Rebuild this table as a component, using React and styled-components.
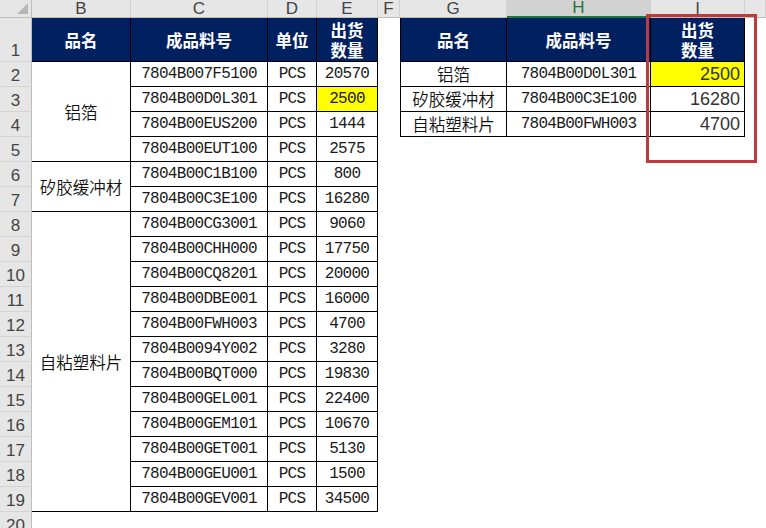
import React from 'react';
import styled, { createGlobalStyle, css } from 'styled-components';

const GlobalStyle = createGlobalStyle`
  html, body {
    margin: 0;
    padding: 0;
    background: #ffffff;
    overflow: hidden;
  }
`;

const COLS = ['B', 'C', 'D', 'E', 'F', 'G', 'H', 'I', ''];

const leftRows = [
    { code: '7804B007F5100', qty: '20570' },
    { code: '7804B00D0L301', qty: '2500', hi: true },
    { code: '7804B00EUS200', qty: '1444' },
    { code: '7804B00EUT100', qty: '2575' },
    { code: '7804B00C1B100', qty: '800' },
    { code: '7804B00C3E100', qty: '16280' },
    { code: '7804B00CG3001', qty: '9060' },
    { code: '7804B00CHH000', qty: '17750' },
    { code: '7804B00CQ8201', qty: '20000' },
    { code: '7804B00DBE001', qty: '16000' },
    { code: '7804B00FWH003', qty: '4700' },
    { code: '7804B0094Y002', qty: '3280' },
    { code: '7804B00BQT000', qty: '19830' },
    { code: '7804B00GEL001', qty: '22400' },
    { code: '7804B00GEM101', qty: '10670' },
    { code: '7804B00GET001', qty: '5130' },
    { code: '7804B00GEU001', qty: '1500' },
    { code: '7804B00GEV001', qty: '34500' },
];

const groups = [
    { name: '铝箔', from: 2, span: 4 },
    { name: '矽胶缓冲材', from: 6, span: 2 },
    { name: '自粘塑料片', from: 8, span: 12 },
];

const rightRows = [
    { name: '铝箔', code: '7804B00D0L301', qty: '2500', hi: true },
    { name: '矽胶缓冲材', code: '7804B00C3E100', qty: '16280' },
    { name: '自粘塑料片', code: '7804B00FWH003', qty: '4700' },
];

const Sheet = styled.div`
  position: relative;
  display: grid;
  grid-template-columns: 32px 99px 137px 49px 61px 22px 107px 144px 94px 1fr;
  grid-template-rows: 18px 44px repeat(19, 25px);
  width: 766px;
  height: 528px;
  overflow: hidden;
  background: #ffffff;
`;

const Corner = styled.div`
  grid-row: 1;
  grid-column: 1;
  position: relative;
  background: #e6e6e6;
  border-right: 1px solid #bdbdbd;
  border-bottom: 1px solid #bdbdbd;
  box-sizing: border-box;

  &::after {
    content: '';
    position: absolute;
    right: 3px;
    bottom: 3px;
    border-left: 11px solid transparent;
    border-bottom: 11px solid #b7b7b7;
  }
`;

const headText = css`
  font-family: "Liberation Sans", Arial, sans-serif;
  font-size: 17px;
  color: #444444;
  background: #e6e6e6;
  box-sizing: border-box;
  display: flex;
  justify-content: center;
`;

const ColHead = styled.div`
  ${headText}
  grid-row: 1;
  grid-column: ${(p) => p.$col};
  align-items: center;
  line-height: 17px;
  border-right: 1px solid #d0d0d0;
  border-bottom: 1px solid #bdbdbd;

  ${(p) => p.$selected && css`
    background: #d2d2d2;
    color: #217346;
    line-height: 16px;
    border-bottom: 2px solid #217346;
  `}
`;

const RowHead = styled.div`
  ${headText}
  grid-row: ${(p) => p.$row};
  grid-column: 1;
  align-items: flex-end;
  line-height: 21px;
  border-right: 1px solid #bdbdbd;
  border-bottom: 1px solid #d4d4d4;
`;

const fonts = {
    cjk: css`
      font-family: "Noto Sans CJK SC", "Liberation Sans", sans-serif;
      font-size: 16.5px;
      font-weight: 350;
    `,
    mono: css`
      font-family: "Liberation Mono", "Noto Sans CJK SC", monospace;
      font-size: 16px;
      letter-spacing: -0.7px;
      color: #1a1a1a;
    `,
    num: css`
      font-family: "Liberation Sans", Arial, sans-serif;
      font-size: 18px;
      color: #333333;
    `,
};

const Cell = styled.div`
  grid-row: ${(p) => p.$row} / span ${(p) => p.$span || 1};
  grid-column: ${(p) => p.$col};
  box-sizing: border-box;
  display: flex;
  align-items: center;
  justify-content: ${(p) => (p.$right ? 'flex-end' : 'center')};
  padding-right: ${(p) => (p.$right ? '4px' : '0')};
  border-right: 1px solid #000000;
  border-bottom: 1px solid #000000;
  border-left: ${(p) => (p.$edge ? '1px solid #000000' : 'none')};
  color: #111111;
  white-space: nowrap;
  background: ${(p) => (p.$hi ? '#ffff00' : '#ffffff')};
  ${(p) => fonts[p.$font || 'cjk']}
`;

const HeadCell = styled(Cell)`
  background: #002060;
  color: #ffffff;
  font-family: "Noto Sans CJK SC", sans-serif;
  font-size: 16.5px;
  font-weight: 700;
  text-align: center;
  line-height: 20px;
  letter-spacing: 0;
`;

const Highlight = styled.div`
  position: absolute;
  left: 646px;
  top: 14px;
  width: 111px;
  height: 149px;
  box-sizing: border-box;
  border: 3px solid #c1393d;
  pointer-events: none;
`;

function Header({ cols, edgeCol }) {
    return cols.map(([col, label]) => (
        <HeadCell key={col} $row={2} $col={col} $edge={col === edgeCol}>
            {label}
        </HeadCell>
    ));
}

function QtyLabel() {
    return (
        <span>
            出货<br />数量
        </span>
    );
}

export default function App() {
    const rowNums = Array.from({ length: 20 }, (_, i) => i + 1);

    return (
        <>
            <GlobalStyle />
            <Sheet>
                <Corner />
                {COLS.map((c, i) => (
                    <ColHead key={i} $col={i + 2} $selected={c === 'H'}>
                        {c}
                    </ColHead>
                ))}
                {rowNums.map((n) => (
                    <RowHead key={n} $row={n + 1}>
                        {n}
                    </RowHead>
                ))}

                <Header
                    cols={[
                        [2, '品名'],
                        [3, '成品料号'],
                        [4, '单位'],
                        [5, <QtyLabel key="q" />],
                    ]}
                />
                {groups.map((g) => (
                    <Cell key={g.name} $row={g.from + 1} $span={g.span} $col={2}>
                        {g.name}
                    </Cell>
                ))}
                {leftRows.map((r, i) => (
                    <React.Fragment key={r.code}>
                        <Cell $row={i + 3} $col={3} $font="mono">{r.code}</Cell>
                        <Cell $row={i + 3} $col={4} $font="mono">PCS</Cell>
                        <Cell $row={i + 3} $col={5} $font="mono" $hi={r.hi}>{r.qty}</Cell>
                    </React.Fragment>
                ))}

                <Header
                    edgeCol={7}
                    cols={[
                        [7, '品名'],
                        [8, '成品料号'],
                        [9, <QtyLabel key="q" />],
                    ]}
                />
                {rightRows.map((r, i) => (
                    <React.Fragment key={r.code}>
                        <Cell $row={i + 3} $col={7} $edge>{r.name}</Cell>
                        <Cell $row={i + 3} $col={8} $font="mono">{r.code}</Cell>
                        <Cell $row={i + 3} $col={9} $font="num" $right $hi={r.hi}>{r.qty}</Cell>
                    </React.Fragment>
                ))}

                <Highlight />
            </Sheet>
        </>
    );
}
